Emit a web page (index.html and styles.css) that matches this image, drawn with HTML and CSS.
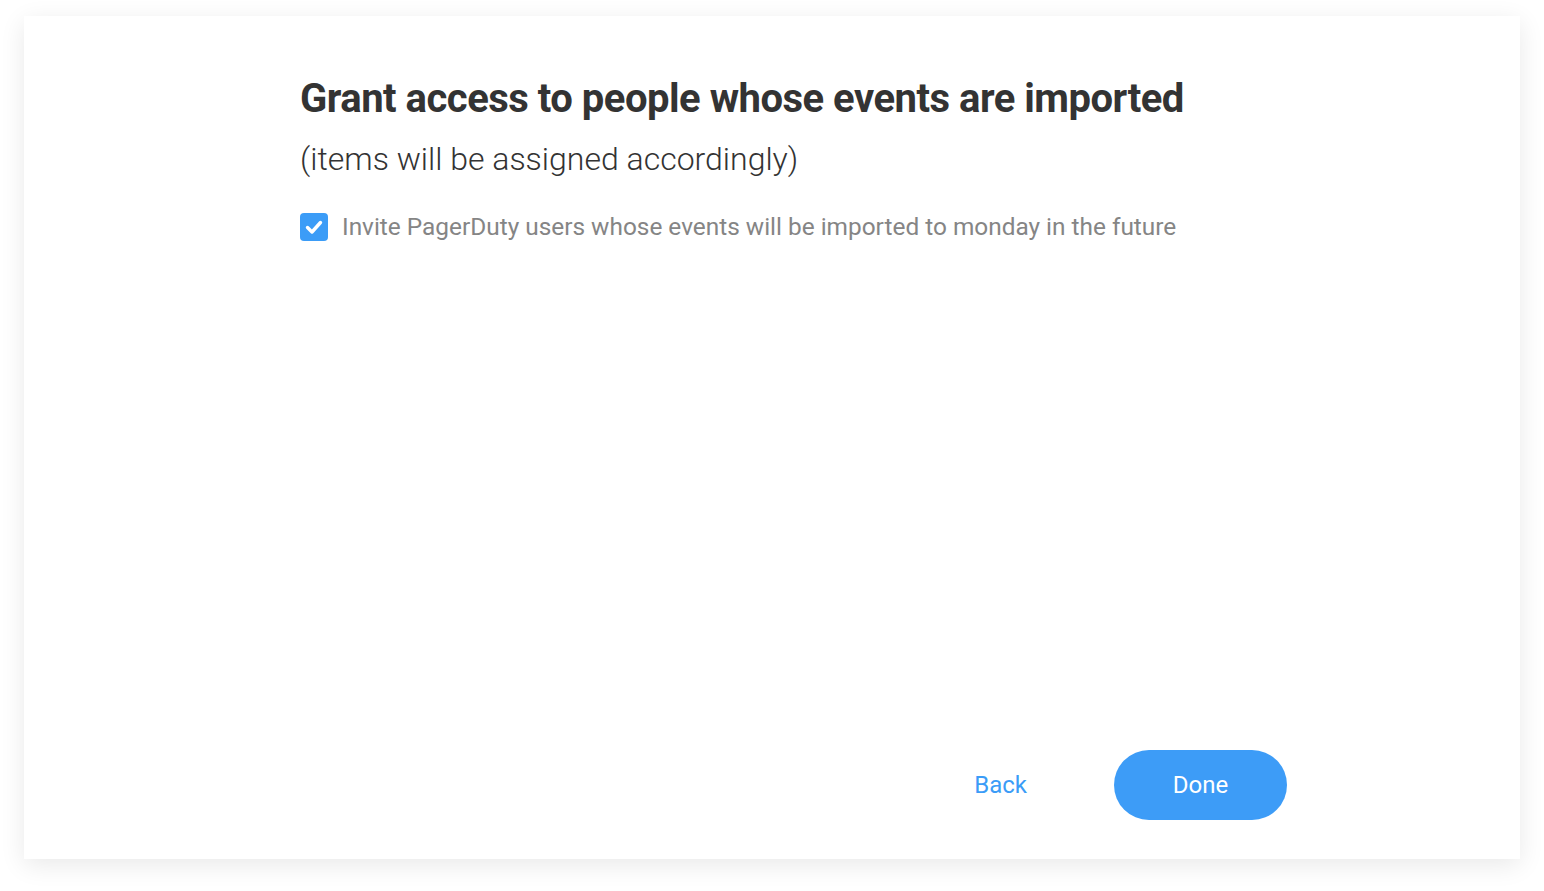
FILE: index.html
```html
<!DOCTYPE html>
<html>
<head>
<meta charset="utf-8">
<link rel="stylesheet" href="styles.css">
</head>
<body>
<div class="card">
  <div class="content">
    <h1 class="title">Grant access to people whose events are imported</h1>
    <p class="subtitle">(items will be assigned accordingly)</p>
    <label class="option">
      <span class="checkbox">
        <svg width="28" height="28" viewBox="0 0 28 28"><rect width="28" height="28" rx="4" fill="#3b9cf7"/><path d="M7.5 14.5 L12 19 L20.5 9.5" fill="none" stroke="#fff" stroke-width="3.4" stroke-linecap="round" stroke-linejoin="round"/></svg>
      </span>
      <span class="option-text">Invite PagerDuty users whose events will be imported to monday in the future</span>
    </label>
  </div>
  <div class="actions">
    <button class="back">Back</button>
    <button class="done">Done</button>
  </div>
</div>
</body>
</html>
```
FILE: styles.css
```css
html, body {
  margin: 0;
  padding: 0;
  background: #ffffff;
}
body {
  padding: 16px 24px 32px 24px;
  font-family: Roboto, "Liberation Sans", sans-serif;
}
.card {
  width: 1496px;
  height: 843px;
  box-sizing: border-box;
  background: #fff;
  box-shadow: 0 6px 24px rgba(0, 0, 0, 0.09);
  display: flex;
  flex-direction: column;
  justify-content: space-between;
  padding: 59px 233px 39px 276px;
}
.content {
  display: flex;
  flex-direction: column;
}
.title {
  margin: 0;
  font-size: 40px;
  line-height: 48px;
  font-weight: 700;
  color: #333333;
  letter-spacing: -0.5px;
}
.subtitle {
  margin: 16px 0 0 0;
  font-size: 32px;
  line-height: 40px;
  font-weight: 300;
  color: #333333;
}
.option {
  margin-top: 32px;
  display: flex;
  align-items: center;
  gap: 14px;
}
.checkbox {
  width: 28px;
  height: 28px;
  display: flex;
}
.option-text {
  font-size: 24.4px;
  line-height: 32px;
  font-weight: 400;
  color: #858585;
}
.actions {
  display: flex;
  justify-content: flex-end;
  align-items: center;
  gap: 87px;
}
.actions button {
  font-family: Roboto, "Liberation Sans", sans-serif;
  font-size: 24px;
  border: none;
  cursor: pointer;
}
.back {
  background: none;
  color: #3b9cf7;
  padding: 0;
}
.done {
  width: 173px;
  height: 70px;
  border-radius: 35px;
  background: #3d9cf7;
  color: #fff;
}
```
